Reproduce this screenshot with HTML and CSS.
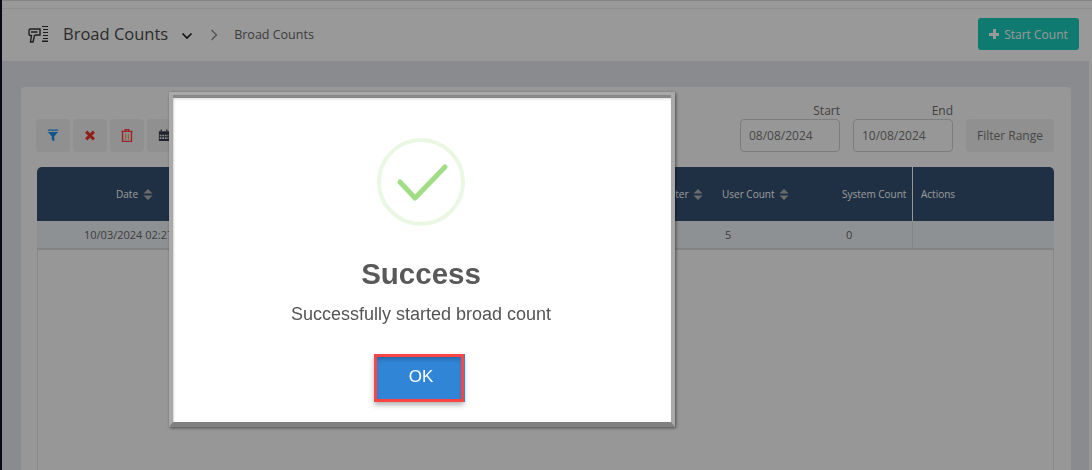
FILE: index.html
```html
<html>
  <head>
    <title>Broad Counts</title>
    <link rel="stylesheet" href="styles.css">
  </head>
  <body>
    <svg class="defs" xmlns="http://www.w3.org/2000/svg">
      <symbol id="sort" viewBox="0 0 10 11">
        <path fill="currentColor" d="M5 0 9.5 4.4H.5ZM5 11 .5 6.600H9.500Z" />
      </symbol>
    </svg>
    <div class="app">
      <header class="topbar">
        <div class="crumbs">
          <svg class="scanner" xmlns="http://www.w3.org/2000/svg" viewBox="0 0 22 18">
            <path fill="none" stroke="currentColor" stroke-width="1.400" d="M2 5.500Q2 4 3.500 4H13V10H9L7.500 10.500 6 17H3.500L4.500 10.500H3.500Q2 10.500 2 9ZM4 7H10.500" />
            <path fill="currentColor" d="M15 1h6v1h-6zM16 4h5v1h-5zM16 7h5v1h-5zM16 10h5v1h-5zM16 13h5v1h-5zM15 15.500h6V17h-6z" />
          </svg>
          <span class="page-title">Broad Counts</span>
          <svg class="chevron" xmlns="http://www.w3.org/2000/svg" viewBox="0 0 12 8">
            <path fill="none" stroke="currentColor" stroke-width="1.700" d="M1.500 1.500 6 6l4.500-4.500" />
          </svg>
          <svg class="sep" xmlns="http://www.w3.org/2000/svg" viewBox="0 0 8 12">
            <path fill="none" stroke="currentColor" stroke-width="1.300" d="M1.500 1 6.500 6l-5 5" />
          </svg>
          <span class="crumb">Broad Counts</span>
        </div>
        <button class="start-count"><span class="plus"></span>Start Count</button>
      </header>

      <main class="page">
        <section class="panel">
          <div class="toolbar">
            <div class="tools">
              <button class="tool">
                <svg xmlns="http://www.w3.org/2000/svg" viewBox="0 0 14 14" class="ico">
                  <path fill="#1b8cf0" d="M1 0h12v1.600H1zM1 3h12L8.500 8v6l-3-2V8Z" />
                </svg>
              </button>
              <button class="tool">
                <svg xmlns="http://www.w3.org/2000/svg" viewBox="0 0 14 14" class="ico">
                  <path fill="none" stroke="#f0352a" stroke-width="3.400" d="M2.500 2.500 11.500 11.500M11.500 2.500 2.500 11.500" />
                </svg>
              </button>
              <button class="tool">
                <svg xmlns="http://www.w3.org/2000/svg" viewBox="0 0 12 14" class="ico">
                  <path fill="none" stroke="#ff3c46" stroke-width="1.500" d="M0 2.500h12M4 2.500V.7h4v1.800M1.200 2.500v10.800h9.600V2.500" />
                  <path fill="#ff9a50" d="M3.800 5h1.300v6.500H3.800zM6.900 5h1.300v6.500H6.900z" />
                </svg>
              </button>
              <button class="tool">
                <svg xmlns="http://www.w3.org/2000/svg" viewBox="0 0 14 14" class="ico">
                  <path fill="#3a3f50" d="M1 2h12v11.500H1zM2 6v2h2V6zM5 6v2h2V6zM8 6v2h2V6zM11 6v2h1V6zM2 9v2h2V9zM5 9v2h2V9zM8 9v2h2V9zM11 9v2h1V9z" />
                  <path fill="#3a3f50" d="M3 0h1.500v2H3zM9.500 0H11v2H9.500z" />
                </svg>
              </button>
            </div>
            <div class="range">
              <label class="field"><span>Start</span><input value="08/08/2024"></label>
              <label class="field"><span>End</span><input value="10/08/2024"></label>
              <button class="tool filter-range">Filter Range</button>
            </div>
          </div>

          <div class="table">
            <div class="row head">
              <div class="cell c-date">Date <svg class="sort"><use href="#sort" /></svg></div>
              <div class="cell c-filter">Filter <svg class="sort"><use href="#sort" /></svg></div>
              <div class="cell c-user">User Count <svg class="sort"><use href="#sort" /></svg></div>
              <div class="cell c-system">System Count</div>
              <div class="cell c-actions">Actions</div>
            </div>
            <div class="row body">
              <div class="cell c-date">10/03/2024 02:27:14 PM</div>
              <div class="cell c-filter"></div>
              <div class="cell c-user">5</div>
              <div class="cell c-system">0</div>
              <div class="cell c-actions"></div>
            </div>
          </div>
        </section>
      </main>
    </div>

    <!-- success dialog over the dimmed page -->
    <div class="overlay">
      <div class="modal">
        <svg class="success-icon" xmlns="http://www.w3.org/2000/svg" viewBox="0 0 88 88">
          <circle cx="44" cy="44" r="42" fill="none" stroke="#eaf7e3" stroke-width="4" />
          <path fill="none" stroke="#a0dd85" stroke-width="5" stroke-linecap="round" stroke-linejoin="round" d="M23 44 38 60 68 29" />
        </svg>
        <h2 class="modal-title">Success</h2>
        <p class="modal-text">Successfully started broad count</p>
        <button class="ok">OK</button>
      </div>
    </div>
  </body>
</html>
```

FILE: styles.css
```css
html, body { padding: 0; margin: 0; height: 100%; overflow: hidden; }
body { font-family: "Open Sans", sans-serif; color: #777; background: #fff; }
button { font-family: inherit; cursor: pointer; }
.defs { display: none; }

.app {
  display: flex;
  flex-direction: column;
  height: 100%;
  border-left: 2px solid #100c28;
  box-sizing: border-box;
}

/* top bar */
.topbar {
  display: flex;
  justify-content: space-between;
  align-items: center;
  height: 61px;
  padding: 6px 13px 0 25px;
  box-sizing: border-box;
  background: #fff;
  border-top: 1px solid #dcdcdc;
  position: relative;
  flex-shrink: 0;
}
.topbar::before {
  content: "";
  display: block;
  height: 1px;
  background: #efefef;
  position: absolute;
  top: 7px;
  left: 0;
  right: 0;
}
.crumbs { display: flex; align-items: center; color: #555; }
.scanner { width: 22px; height: 18px; color: #333; margin-right: 14px; }
.page-title { font-size: 16.500px; color: #4a4a4a; line-height: 24px; }
.chevron { width: 12px; height: 8px; color: #222; margin: 3px 0 0 13px; }
.sep { width: 8px; height: 12px; color: #888; margin: 1px 0 0 17px; }
.crumb { font-size: 12.500px; color: #666; margin-left: 16px; }
.start-count {
  width: 101px;
  height: 32px;
  border: 0;
  border-radius: 3px;
  background: #19cbbb;
  color: #fff;
  font-size: 12px;
  display: flex;
  align-items: center;
  justify-content: center;
  padding: 0;
}
.plus {
  width: 10px;
  height: 10px;
  margin-right: 5px;
  background:
    linear-gradient(#fff, #fff) center / 10px 3px no-repeat,
    linear-gradient(#fff, #fff) center / 3px 10px no-repeat;
}

/* page */
.page {
  flex: 1;
  min-height: 0;
  padding: 26px 18px 0 19px;
  background: #e6e8ef;
  border-right: 3px solid #fcfcfc;
}
.panel {
  height: 100%;
  background: #fcfcfc;
  border-radius: 4px 4px 0 0;
  padding: 16px 17px 0 15px;
  box-sizing: border-box;
}
.toolbar {
  display: flex;
  justify-content: space-between;
  align-items: flex-end;
  height: 49px;
}
.tools { display: flex; gap: 3px; }
.tool {
  height: 33px;
  width: 34px;
  border: 0;
  border-radius: 4px;
  background: #f0f0f0;
  color: #777;
  padding: 0;
  display: flex;
  align-items: center;
  justify-content: center;
}
.ico { width: 12px; height: 13px; }
.range { display: flex; align-items: flex-end; }
.field { display: flex; flex-direction: column; align-items: flex-end; margin-right: 13px; }
.field span { font-size: 12px; line-height: 16px; color: #6e6e6e; }
.field input {
  width: 100px;
  height: 33px;
  box-sizing: border-box;
  border: 1px solid #d0d0d0;
  border-radius: 4px;
  background: transparent;
  font: 12px "Open Sans", sans-serif;
  color: #777;
  padding: 0 8px;
}
.filter-range { width: 88px; font-size: 12px; }

/* table */
.table {
  margin: 15px 0 0 1px;
  height: 400px;
  border: 1px solid #e6e6e6;
  border-top: 0;
  border-radius: 5px 5px 0 0;
}
.row { display: flex; margin: 0 -1px; }
.row.head {
  height: 54px;
  background: #345172;
  color: #fff;
  font-size: 10px;
  align-items: stretch;
  border-radius: 5px 5px 0 0;
}
.row.body {
  height: 29px;
  background: #edf2f6;
  color: #666;
  font-size: 11px;
  border-bottom: 2px solid #dcdcdc;
  box-sizing: border-box;
}
.cell { display: flex; align-items: center; box-sizing: border-box; white-space: nowrap; }
.sort { width: 10px; height: 11px; color: #b5b5b5; margin-left: 5px; }
.c-date { width: 600px; padding-left: 79px; }
.c-filter { width: 75px; padding-left: 28px; }
.c-user { width: 120px; padding-left: 10px; }
.c-user .sort { margin-left: 4px; }
.c-system { width: 81px; padding-left: 10px; border-right: 1px solid #fff; }
.c-actions { flex: 1; padding-left: 8px; }
.row.body .c-date { padding-left: 47px; }
.row.body .c-user { padding-left: 13px; }
.row.body .c-system { padding-left: 14px; border-right-color: #dcdcdc; }

/* dialog */
.overlay {
  position: fixed;
  top: 0;
  left: 0;
  right: 0;
  bottom: 0;
  background: rgba(0, 0, 0, 0.4);
  padding: 92px 0 0 169px;
  box-sizing: border-box;
}
.modal {
  width: 506px;
  height: 335px;
  box-sizing: border-box;
  border-style: solid;
  border-width: 3px 4px 5px 4px;
  border-color: #a9a9a9 #a9a9a9 #808080 #a9a9a9;
  padding-right: 2px;
  background: #fff;
  box-shadow: 1px 1px 3px rgba(0, 0, 0, 0.5), inset 0 3px 0 #888, inset 0 5px 3px -1px rgba(0, 0, 0, 0.15), inset 2px 0 2px -1px rgba(0, 0, 0, 0.15);
  display: flex;
  flex-direction: column;
  align-items: center;
  font-family: "Liberation Sans", Arial, sans-serif;
}
.success-icon { width: 88px; height: 88px; margin-top: 43px; }
.modal-title {
  margin: 31px 0 0;
  font-size: 29.500px;
  line-height: 34px;
  font-weight: 700;
  color: #595959;
}
.modal-text { margin: 12px 0 0; font-size: 18px; line-height: 22px; color: #545454; }
.ok {
  margin: 29px 5px 0 0;
  width: 90px;
  height: 48px;
  box-sizing: border-box;
  border: 3px solid #f94545;
  padding: 0 0 3px 5px;
  background: #3085d6;
  color: #fff;
  font-family: inherit;
  font-size: 17px;
  box-shadow: 1px 0 0 #3085d6, 0 3px 5px rgba(0, 0, 0, 0.3), inset 0 4px 4px -2px rgba(0, 0, 0, 0.25);
}
```
